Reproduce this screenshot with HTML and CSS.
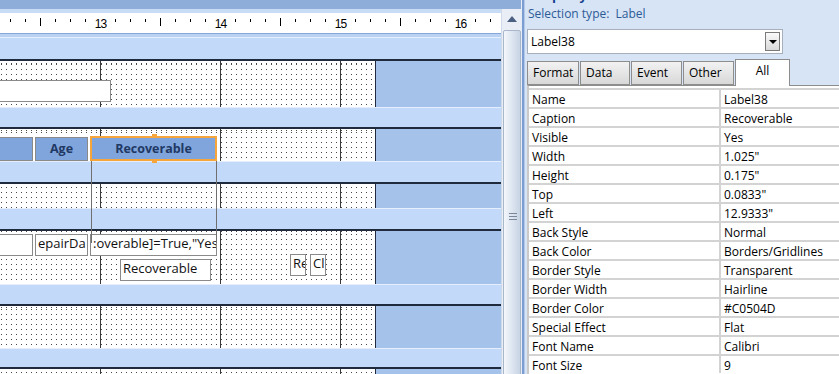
FILE: index.html
```html
<!DOCTYPE html>
<html>
<head>
<meta charset="UTF-8">
<title>Report Design - Property Sheet</title>
<link rel="stylesheet" href="styles.css">
</head>
<body>
<div class="app">
	<div class="left">
		<div class="topbar"></div>
		<div class="work">
			<div class="design">
				<div class="ruler">
					<div class="rn"><span>13</span></div>
					<div class="rn"><span>14</span></div>
					<div class="rn"><span>15</span></div>
					<div class="rn"><span>16</span></div>
				</div>

				<div class="band b22"></div>
				<div class="sect h46">
					<div class="canvas">
						<div class="ctl txt" style="left:-1px; top:19px; width:112px; height:22px;"></div>
					</div>
					<div class="outside"></div>
				</div>

				<div class="band b20"></div>
				<div class="sect h32">
					<div class="canvas">
						<div class="ctl lbl" style="left:-1px; top:8px; width:34px; height:24px;"></div>
						<div class="ctl lbl" style="left:35px; top:8px; width:53px; height:24px;">Age</div>
						<div class="ctl lbl sel" style="left:90px; top:7px; width:127px; height:25px;">Recoverable</div>
						<div class="handle" style="left:152px; top:5px;"></div>
						<div class="handle" style="left:152px; top:30px;"></div>
					</div>
					<div class="outside"></div>
				</div>

				<div class="band b21"></div>
				<div class="sect h24">
					<div class="canvas"></div>
					<div class="outside"></div>
				</div>

				<div class="band b21"></div>
				<div class="sect h53">
					<div class="canvas">
						<div class="ctl txt" style="left:-1px; top:3px; width:34px; height:22px;"></div>
						<div class="ctl txt" style="left:35px; top:3px; width:53px; height:22px;">epairDa</div>
						<div class="ctl txt" style="left:90px; top:3px; width:127px; height:22px;">:overable]=True,"Yes"</div>
						<div class="ctl txt" style="left:120px; top:28px; width:91px; height:22px;">Recoverable</div>
						<div class="ctl txt" style="left:290px; top:23px; width:16px; height:22px;">Re</div>
						<div class="ctl txt" style="left:310px; top:23px; width:16px; height:22px;">Cl</div>
					</div>
					<div class="outside"></div>
				</div>

				<div class="band b20"></div>
				<div class="sect h42">
					<div class="canvas"></div>
					<div class="outside"></div>
				</div>

				<div class="band b19"></div>
				<div class="sect grow">
					<div class="canvas"></div>
					<div class="outside"></div>
				</div>

				<div class="guide" style="left:91px;"></div>
				<div class="guide" style="left:216px;"></div>
			</div>
			<div class="vscroll">
				<div class="sbtn"><i></i></div>
				<div class="thumb"><div class="grip"></div></div>
			</div>
		</div>
	</div>
	<div class="splitter"></div>
	<div class="props">
		<div class="ptitle"><span>Property Sheet</span></div>
		<div class="seltype">Selection type:&nbsp; Label</div>
		<div class="combo"><span>Label38</span><div class="drop"><i></i></div></div>
		<div class="tabs">
			<div class="tab w52">Format</div>
			<div class="tab w50">Data</div>
			<div class="tab w51">Event</div>
			<div class="tab w51">Other</div>
			<div class="tab on">All</div>
		</div>
		<div class="grid">
			<div class="row"><div class="k">Name</div><div class="v">Label38</div></div>
			<div class="row"><div class="k">Caption</div><div class="v">Recoverable</div></div>
			<div class="row"><div class="k">Visible</div><div class="v">Yes</div></div>
			<div class="row"><div class="k">Width</div><div class="v">1.025"</div></div>
			<div class="row"><div class="k">Height</div><div class="v">0.175"</div></div>
			<div class="row"><div class="k">Top</div><div class="v">0.0833"</div></div>
			<div class="row"><div class="k">Left</div><div class="v">12.9333"</div></div>
			<div class="row"><div class="k">Back Style</div><div class="v">Normal</div></div>
			<div class="row"><div class="k">Back Color</div><div class="v">Borders/Gridlines</div></div>
			<div class="row"><div class="k">Border Style</div><div class="v">Transparent</div></div>
			<div class="row"><div class="k">Border Width</div><div class="v">Hairline</div></div>
			<div class="row"><div class="k">Border Color</div><div class="v">#C0504D</div></div>
			<div class="row"><div class="k">Special Effect</div><div class="v">Flat</div></div>
			<div class="row"><div class="k">Font Name</div><div class="v">Calibri</div></div>
			<div class="row"><div class="k">Font Size</div><div class="v">9</div></div>
		</div>
	</div>
</div>
</body>
</html>
```

FILE: styles.css
```css
* {
	box-sizing: border-box;
}
body {
	margin: 0;
	width: 839px;
	height: 374px;
	overflow: hidden;
	background: #d6e4f5;
	font-family: "Open Sans", sans-serif;
	font-size: 12px;
}
.app {
	display: flex;
	height: 374px;
}
.left {
	width: 521px;
	display: flex;
	flex-direction: column;
}
.topbar {
	height: 9px;
	flex: none;
	background: #8fadd9;
}
.work {
	display: flex;
	flex: 1;
	min-height: 0;
}

/* design surface */
.design {
	width: 501px;
	position: relative;
	overflow: hidden;
	display: flex;
	flex-direction: column;
}
.ruler {
	height: 28px;
	flex: none;
	display: flex;
	padding-left: 40px;
	padding-top: 9px;
	background:
		repeating-linear-gradient(90deg, transparent 0 40px, #000 40px 41px, transparent 41px 120px) 0 9px / 100% 8px no-repeat,
		repeating-linear-gradient(90deg, transparent 0 10px, #000 10px 11px, transparent 11px 15px) 0 10px / 100% 3px no-repeat,
		linear-gradient(#c9dcf6 0 4px, #fff 4px 24px, #86a7d8 24px 25px, #b9d1f2 25px 28px);
}
.rn {
	width: 120px;
	flex: none;
	text-align: center;
	font-family: "Liberation Sans", sans-serif;
	font-size: 12px;
	line-height: 12px;
	letter-spacing: -1px;
	color: #000;
}
.rn span {
	background: #fff;
	padding: 0 1px 0 2px;
}
.band {
	flex: none;
	background: linear-gradient(#e4eefc 0 1px, #c3d9f9 1px);
}
.b19 { height: 19px; }
.b20 { height: 20px; }
.b21 { height: 21px; }
.b22 { height: 22px; }

.sect {
	display: flex;
	flex: none;
	border-top: 2px solid #1f2a3c;
}
.h24 { height: 26px; }
.h32 { height: 34px; }
.h42 { height: 44px; }
.h46 { height: 48px; }
.h53 { height: 55px; }
.grow { flex: 1; }

.canvas {
	width: 376px;
	position: relative;
	border-right: 1px solid #1f2a3c;
	background:
		repeating-linear-gradient(90deg, transparent 0 100px, #3a3a3a 100px 101px, transparent 101px 120px),
		repeating-linear-gradient(90deg, transparent 0 1px, #fff 1px 5px) 1px 0,
		repeating-linear-gradient(180deg, transparent 0 1px, #fff 1px 5px) 0 3px,
		#4a4a4a;
}
.outside {
	flex: 1;
	background: #a4c2ea;
}

.ctl {
	position: absolute;
	border: 1px solid #8a8a8a;
	font-family: "Open Sans", sans-serif;
	font-size: 13px;
	white-space: nowrap;
	overflow: hidden;
}
.lbl {
	background: #7fa5dc;
	color: #1f3864;
	font-weight: bold;
	font-size: 12.5px;
	text-align: center;
	line-height: 22px;
}
.sel {
	border: 2px solid #f6a53a;
	line-height: 21px;
}
.txt {
	background: #fff;
	color: #111;
	padding-left: 2px;
	line-height: 17px;
}
.handle {
	position: absolute;
	width: 5px;
	height: 4px;
	background: #f6a53a;
}
.guide {
	position: absolute;
	top: 152px;
	height: 82px;
	width: 1px;
	background: #707070;
}

/* scrollbar */
.vscroll {
	width: 20px;
	display: flex;
	flex-direction: column;
	background: #e9eef6;
	border-left: 1px solid #d0dbea;
}
.sbtn {
	height: 20px;
	flex: none;
	display: flex;
	align-items: center;
	justify-content: center;
}
.sbtn i {
	width: 0;
	height: 0;
	border-left: 5px solid transparent;
	border-right: 5px solid transparent;
	border-bottom: 6px solid #4b5f82;
}
.thumb {
	flex: 1;
	margin: 1px 0 -40px 1px;
	border: 1px solid #a9b7cb;
	border-radius: 2px;
	background: linear-gradient(90deg, #f4f7fb, #d9e2ee 60%, #c8d4e4);
	position: relative;
}
.grip {
	position: absolute;
	left: 5px;
	top: 182px;
	width: 8px;
	height: 7px;
	background: repeating-linear-gradient(180deg, #7b8698 0 1px, transparent 1px 3px);
}
.splitter {
	width: 4px;
	flex: none;
	background: linear-gradient(90deg, #e6edf7 0 1px, #7c9dd1 1px 3px, #b3c9ea 3px 4px);
}

/* property sheet */
.props {
	width: 314px;
	flex: none;
	padding-left: 2px;
	display: flex;
	flex-direction: column;
	overflow: hidden;
}
.ptitle {
	height: 4px;
	overflow: hidden;
	padding-left: 3px;
	color: #15428b;
	font-weight: bold;
	font-size: 13px;
}
.ptitle span {
	display: block;
	line-height: 14px;
	margin-top: -12px;
}
.seltype {
	height: 25px;
	flex: none;
	padding: 2px 0 0 1px;
	line-height: 16px;
	color: #2d5b96;
}
.combo {
	width: 256px;
	height: 25px;
	flex: none;
	background: #fff;
	border: 1px solid #a7afba;
	display: flex;
	align-items: center;
	justify-content: space-between;
	padding-left: 3px;
	line-height: 23px;
}
.drop {
	width: 15px;
	height: 19px;
	margin-right: 2px;
	border: 1px solid #7a7a7a;
	background: linear-gradient(#fafafa, #d9d9d9);
	display: flex;
	align-items: center;
	justify-content: center;
}
.drop i {
	width: 0;
	height: 0;
	border-left: 4px solid transparent;
	border-right: 4px solid transparent;
	border-top: 4px solid #000;
}
.tabs {
	display: flex;
	align-items: flex-end;
	height: 26px;
	margin-top: 5px;
	flex: none;
	position: relative;
	z-index: 1;
}
.tab {
	height: 24px;
	margin-right: 1px;
	border: 1px solid #8d8d8d;
	background: linear-gradient(#f2f2f2, #d8d8d8);
	padding-left: 5px;
	line-height: 21px;
	color: #000;
}
.w52 { width: 52px; }
.w50 { width: 50px; }
.w51 { width: 51px; }
.tab.on {
	width: 55px;
	height: 27px;
	margin-bottom: -1px;
	background: #fff;
	border-bottom: none;
	padding-left: 0;
	text-align: center;
	line-height: 22px;
}
.grid {
	flex: 1;
	background: #fff;
	border-top: 1px solid #8d8d8d;
	border-left: 2px solid #c9c9c9;
	padding-top: 2px;
}
.row {
	display: flex;
	height: 19px;
	border-top: 2px solid #d3d3d3;
	line-height: 14px;
	color: #000;
}
.k {
	width: 190px;
	padding: 3px 0 0 3px;
}
.v {
	flex: 1;
	border-left: 2px solid #d3d3d3;
	padding: 3px 0 0 3px;
}
```
